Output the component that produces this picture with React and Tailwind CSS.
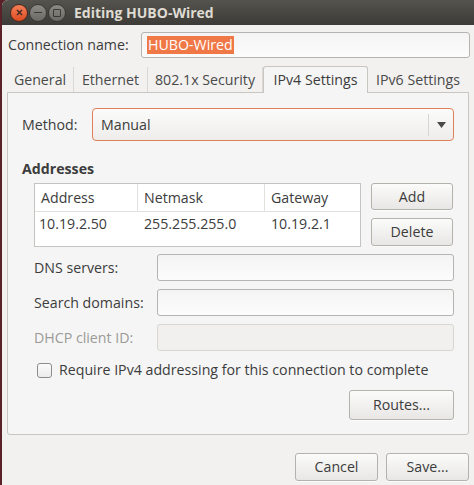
const font = { fontFamily: '"Open Sans", "Noto Sans", sans-serif' };

function Btn({ children, className = '' }) {
  return (
    <div className={`flex items-center justify-center rounded-[3px] border border-[#b4b2ad] bg-gradient-to-b from-[#fbfbfa] to-[#e8e7e5] text-[#3c3c3c] shadow-[0_1px_0_rgba(255,255,255,0.8)] ${className}`}>
      {children}
    </div>
  );
}

function Field({ disabled = false, className = '' }) {
  return (
    <div className={`rounded-[3px] border ${disabled ? 'border-[#d9d7d3] bg-[#f1f0ef]' : 'border-[#b6b4b0] bg-gradient-to-b from-[#f4f4f4] to-[#fcfcfc]'} ${className}`} />
  );
}

export default function App() {
  const tabs = [
    { label: 'General', w: 'w-[67px]' },
    { label: 'Ethernet', w: 'w-[74px]' },
    { label: '802.1x Security', w: 'w-[115px]' },
    { label: 'IPv4 Settings', w: 'w-[105px]', active: true },
    { label: 'IPv6 Settings', w: 'w-[100px]' },
  ];

  return (
    <div className="flex w-[474px] h-[485px] bg-[#5a2228] text-[14.2px] text-[#3c3c3c]" style={font}>
      <div className="w-[2px] shrink-0" />
      <div className="flex-1 flex flex-col bg-[#f2f1f0] rounded-tl-[6px] overflow-hidden">
        {/* title bar */}
        <div className="h-[25px] shrink-0 flex items-center bg-gradient-to-b from-[#55534d] to-[#3c3b37] pl-[8px]">
          <div className="w-[18px] h-[18px] rounded-full bg-gradient-to-b from-[#f57f57] to-[#dc4a1e] border border-[#4a2a20] flex items-center justify-center">
            <svg width="7" height="7" viewBox="0 0 7 7"><path d="M1 1L6 6M6 1L1 6" stroke="#3a2a24" strokeWidth="1.4" /></svg>
          </div>
          <div className="ml-[1px] w-[18px] h-[18px] rounded-full bg-gradient-to-b from-[#8c8b86] to-[#6a6964] border border-[#3a3935] flex items-center justify-center">
            <div className="w-[8px] h-[1.5px] bg-[#3a3935]" />
          </div>
          <div className="ml-[1px] w-[18px] h-[18px] rounded-full bg-gradient-to-b from-[#8c8b86] to-[#6a6964] border border-[#3a3935] flex items-center justify-center">
            <div className="w-[8px] h-[8px] border-[1.5px] border-[#3a3935] rounded-[1px]" />
          </div>
          <span className="ml-[8px] font-bold text-[14px] text-[#dfdbd2]">Editing HUBO-Wired</span>
        </div>

        {/* connection name */}
        <div className="flex items-center mt-[7px] pl-[6px] pr-[4px] h-[26px]">
          <span className="w-[133px]">Connection name:</span>
          <div className="flex-1 h-[26px] rounded-[3px] border border-[#b6b4b0] bg-gradient-to-b from-[#f4f4f4] to-[#fcfcfc] flex items-center pl-[5px]">
            <span className="bg-[#f07746] text-white px-[1px] leading-[18px]">HUBO-Wired</span>
          </div>
        </div>

        {/* tabs */}
        <div className="mt-[7px] ml-[5px] w-[462px] flex items-end h-[27px]">
          {tabs.map((t, i) =>
            t.active ? (
              <div key={t.label} className={`${t.w} h-[27px] -mb-px z-10 flex items-center justify-center rounded-t-[3px] border border-b-0 border-[#c9c6c1] bg-[#f5f5f5] text-[#3c3c3c]`}>
                {t.label}
              </div>
            ) : (
              <div key={t.label} className={`${t.w} h-[25px] flex items-center justify-center text-[#4a4a4a] ${i < 3 ? 'border-r border-[#dad8d4]' : ''}`}>
                {t.label}
              </div>
            )
          )}
        </div>

        {/* panel */}
        <div className="ml-[5px] w-[462px] h-[343px] border border-[#c9c6c1] rounded-b-[3px] bg-[#f5f5f5] flex flex-col">
          <div className="flex items-center mt-[15px] pl-[14px] h-[33px]">
            <span className="w-[70px]">Method:</span>
            <div className="w-[362px] h-[33px] rounded-[4px] border border-[#e0805a] bg-gradient-to-b from-[#fbfbfa] to-[#eeedeb] flex items-center">
              <span className="flex-1 pl-[8px]">Manual</span>
              <div className="w-px h-[22px] bg-[#d8d6d2]" />
              <div className="w-[24px] flex justify-center">
                <svg width="9" height="6" viewBox="0 0 9 6"><path d="M0 0H9L4.5 6Z" fill="#4a4a4a" /></svg>
              </div>
            </div>
          </div>

          <div className="mt-[19px] pl-[14px] font-bold leading-[18px]">Addresses</div>

          <div className="flex mt-[5px] pl-[26px]">
            <div className="w-[327px] h-[64px] border border-[#c6c4c0] bg-white flex flex-col">
              <div className="flex h-[28px] border-b border-[#e2e0dd] items-center">
                <div className="w-[103px] h-full flex items-center pl-[6px] border-r border-[#e2e0dd]">Address</div>
                <div className="w-[127px] h-full flex items-center pl-[6px] border-r border-[#e2e0dd]">Netmask</div>
                <div className="flex-1 h-full flex items-center pl-[6px]">Gateway</div>
              </div>
              <div className="flex h-[24px] items-center">
                <div className="w-[103px] pl-[4px]">10.19.2.50</div>
                <div className="w-[127px] pl-[6px]">255.255.255.0</div>
                <div className="flex-1 pl-[6px]">10.19.2.1</div>
              </div>
            </div>
            <div className="ml-[10px] flex flex-col gap-[8px]">
              <Btn className="w-[82px] h-[27px]">Add</Btn>
              <Btn className="w-[82px] h-[28px]">Delete</Btn>
            </div>
          </div>

          <div className="flex items-center mt-[7px] pl-[26px] h-[27px]">
            <span className="w-[123px]">DNS servers:</span>
            <Field className="w-[297px] h-[27px]" />
          </div>
          <div className="flex items-center mt-[8px] pl-[26px] h-[27px]">
            <span className="w-[123px]">Search domains:</span>
            <Field className="w-[297px] h-[27px]" />
          </div>
          <div className="flex items-center mt-[8px] pl-[26px] h-[27px]">
            <span className="w-[123px] text-[#9b9a97]">DHCP client ID:</span>
            <Field disabled className="w-[297px] h-[27px]" />
          </div>

          <div className="flex items-center mt-[10px] pl-[29px] h-[18px]">
            <div className="w-[15px] h-[15px] rounded-[3px] border border-[#8e8c88] bg-gradient-to-b from-[#fbfbfb] to-[#ececec]" />
            <span className="ml-[7px]">Require IPv4 addressing for this connection to complete</span>
          </div>

          <div className="flex justify-end mt-[11px] pr-[14px]">
            <Btn className="w-[105px] h-[30px]">Routes...</Btn>
          </div>
        </div>

        {/* bottom buttons */}
        <div className="flex justify-end mt-[18px] pr-[5px] gap-[8px]">
          <Btn className="w-[83px] h-[28px]">Cancel</Btn>
          <Btn className="w-[83px] h-[28px]">Save...</Btn>
        </div>
      </div>
    </div>
  );
}
